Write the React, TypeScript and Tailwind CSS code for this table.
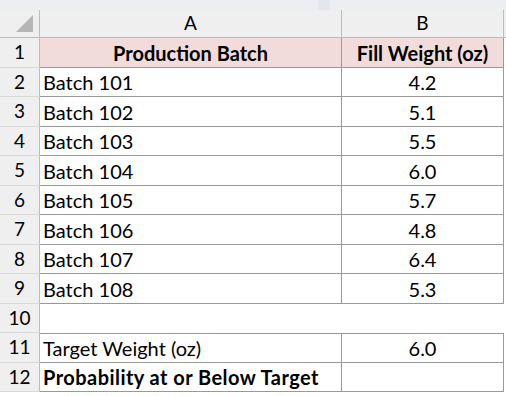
import React from 'react';

const rows: { n: number; a: string; b: string; kind: 'head' | 'data' | 'blank' | 'bold' }[] = [
  { n: 1, a: 'Production Batch', b: 'Fill Weight (oz)', kind: 'head' },
  { n: 2, a: 'Batch 101', b: '4.2', kind: 'data' },
  { n: 3, a: 'Batch 102', b: '5.1', kind: 'data' },
  { n: 4, a: 'Batch 103', b: '5.5', kind: 'data' },
  { n: 5, a: 'Batch 104', b: '6.0', kind: 'data' },
  { n: 6, a: 'Batch 105', b: '5.7', kind: 'data' },
  { n: 7, a: 'Batch 106', b: '4.8', kind: 'data' },
  { n: 8, a: 'Batch 107', b: '6.4', kind: 'data' },
  { n: 9, a: 'Batch 108', b: '5.3', kind: 'data' },
  { n: 10, a: '', b: '', kind: 'blank' },
  { n: 11, a: 'Target Weight (oz)', b: '6.0', kind: 'data' },
  { n: 12, a: 'Probability at or Below Target', b: '', kind: 'bold' },
];

export default function App() {
  return (
    <div className="w-[506px] h-[396px] overflow-hidden bg-white text-black" style={{ fontFamily: 'Lato, "Liberation Sans", sans-serif' }}>
      {/* strip of the formula bar above */}
      <div className="h-[10px] bg-[#e6e9ee] flex">
        <div className="w-[318px] bg-[#eceef1]" />
        <div className="w-[12px] bg-[#e3e6ea]" />
        <div className="flex-1 bg-[#eceef1]" />
      </div>

      {/* column headers */}
      <div className="flex h-[28px] bg-[#efefef] border-b border-[#bdbdbd]">
        <div className="w-[40px] relative border-r border-[#bdbdbd]">
          <svg className="absolute left-[16px] top-[5px]" width="18" height="18" viewBox="0 0 18 18">
            <polygon points="0,17 17,17 17,0" fill="#b5b5b5" />
          </svg>
        </div>
        <div className="w-[302px] flex items-center justify-center text-[19px] border-r border-[#bdbdbd]">A</div>
        <div className="w-[162px] flex items-center justify-center text-[19px] border-r border-[#bdbdbd]">B</div>
        <div className="flex-1" />
      </div>

      {rows.map((r, i) => {
        const h = i % 2 === 0 ? 'h-[30px]' : 'h-[29px]';
        const boxed = r.kind !== 'blank';
        const prevBlank = rows[i - 1]?.kind === 'blank';
        return (
          <div key={r.n} className={`flex ${h}`}>
            <div className="w-[40px] bg-[#efefef] border-r border-[#bdbdbd] border-b border-b-[#dadada] flex items-center justify-center text-[19px]">
              {r.n}
            </div>
            <div
              className={`w-[302px] flex items-center px-[3px] text-[20px] ${
                boxed ? 'border-r border-b border-[#999999]' : ''
              } ${prevBlank ? 'border-t border-t-[#999999]' : ''} ${
                r.kind === 'head' ? 'bg-[#f2dcdb] justify-center font-bold' : ''
              } ${r.kind === 'bold' ? 'font-bold tracking-[0.45px]' : ''}`}
            >
              {r.a}
            </div>
            <div
              className={`w-[162px] flex items-center justify-center text-[20px] ${
                boxed ? 'border-r border-b border-[#999999]' : ''
              } ${prevBlank ? 'border-t border-t-[#999999]' : ''} ${r.kind === 'head' ? 'bg-[#f2dcdb] font-bold' : ''}`}
            >
              {r.b}
            </div>
            <div className="flex-1" />
          </div>
        );
      })}
    </div>
  );
}
